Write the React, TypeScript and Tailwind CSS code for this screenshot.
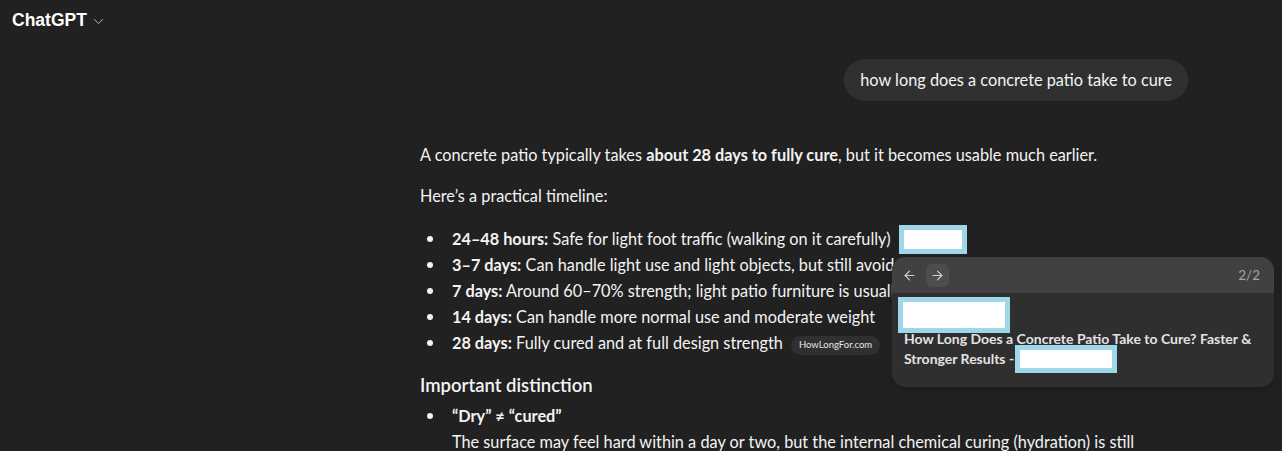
import { ArrowLeft, ArrowRight, ChevronDown } from 'lucide-react';

const timeline = [
  { label: '24–48 hours:', text: 'Safe for light foot traffic (walking on it carefully)', redacted: true },
  { label: '3–7 days:', text: 'Can handle light use and light objects, but still avoid heavy loads' },
  { label: '7 days:', text: 'Around 60–70% strength; light patio furniture is usually fine' },
  { label: '14 days:', text: 'Can handle more normal use and moderate weight' },
  { label: '28 days:', text: 'Fully cured and at full design strength', source: 'HowLongFor.com' },
];

function Redacted({ className }: { className: string }) {
  return <span className={`inline-block bg-white border-[5px] border-[#9dd7e8] align-middle ${className}`} />;
}

function Bullet() {
  return (
    <span className="flex w-8 shrink-0 pt-[10px] pl-[7px]">
      <span className="h-[6px] w-[6px] rounded-full bg-[#f3f3f3]" />
    </span>
  );
}

export default function App() {
  return (
    <div className="relative h-[451px] w-full overflow-hidden bg-[#212121] text-[#f3f3f3] font-['Lato',sans-serif] text-[16.3px]">
      <header className="flex h-[40px] items-center px-3">
        <span className="font-['Liberation_Sans',Arial,sans-serif] text-[17.5px] font-bold text-white">ChatGPT</span>
        <ChevronDown className="ml-[3px] mt-[2px] h-[17px] w-[17px] text-[#b4b4b4]" strokeWidth={1.4} />
      </header>

      <main className="ml-[420px] w-[768px]">
        <div className="mt-[19px] flex justify-end">
          <div className="rounded-full bg-[#303030] px-4 py-[9px] leading-6">
            how long does a concrete patio take to cure
          </div>
        </div>

        <div className="w-[730px]">
          <p className="mt-[41px] leading-[26px]">
            A concrete patio typically takes <strong className="font-bold">about 28 days to fully cure</strong>, but it becomes usable much earlier.
          </p>
          <p className="mt-[15px] leading-[26px]">Here’s a practical timeline:</p>

          <ul className="mt-[17px] leading-[26px]">
            {timeline.map((item) => (
              <li key={item.label} className="flex">
                <Bullet />
                <span className="whitespace-nowrap">
                  <strong className="font-bold">{item.label}</strong> {item.text}
                  {item.redacted && <Redacted className="relative -top-[1px] ml-2 -my-[3px] h-[29px] w-[68px]" />}
                  {item.source && (
                    <span className="ml-2 inline-flex h-[19px] items-center rounded-full bg-[#303030] px-[8px] align-middle text-[9.5px] text-[#e6e6e6]">
                      {item.source}
                    </span>
                  )}
                </span>
              </li>
            ))}
          </ul>

          <h3 className="mt-[15px] text-[18.5px] font-semibold leading-7">Important distinction</h3>
          <ul className="mt-[4px] leading-[26px]">
            <li className="flex">
              <Bullet />
              <div>
                <strong className="font-bold">“Dry” ≠ “cured”</strong>
                <p>The surface may feel hard within a day or two, but the internal chemical curing (hydration) is still ongoing for several weeks.</p>
              </div>
            </li>
          </ul>
        </div>
      </main>

      <div className="absolute left-[892px] top-[257px] h-[130px] w-[382px] overflow-hidden rounded-[14px] bg-[#2f2f2f] shadow-lg">
        <div className="flex h-[36px] items-center bg-[#414141] px-[6px]">
          <button className="flex h-[23px] w-[23px] items-center justify-center rounded-md text-[#d0d0d0]">
            <ArrowLeft className="h-[15px] w-[15px]" strokeWidth={1.8} />
          </button>
          <button className="ml-[5px] flex h-[23px] w-[23px] items-center justify-center rounded-md bg-[#4d4d4d] text-[#d0d0d0]">
            <ArrowRight className="h-[15px] w-[15px]" strokeWidth={1.8} />
          </button>
          <span className="ml-auto pr-[8px] text-[13.5px] text-[#a3a3a3]">2/2</span>
        </div>
        <div className="px-3 pt-[4px]">
          <Redacted className="-ml-[6px] block h-[36px] w-[112px]" />
          <p className="-mt-1 text-[14px] font-bold leading-5 text-[#e3e3e3]">
            How Long Does a Concrete Patio Take to Cure? Faster &amp; Stronger Results -
            <Redacted className="relative -top-[1px] -my-[4px] ml-[1px] h-[28px] w-[102px]" />
          </p>
        </div>
      </div>
    </div>
  );
}
